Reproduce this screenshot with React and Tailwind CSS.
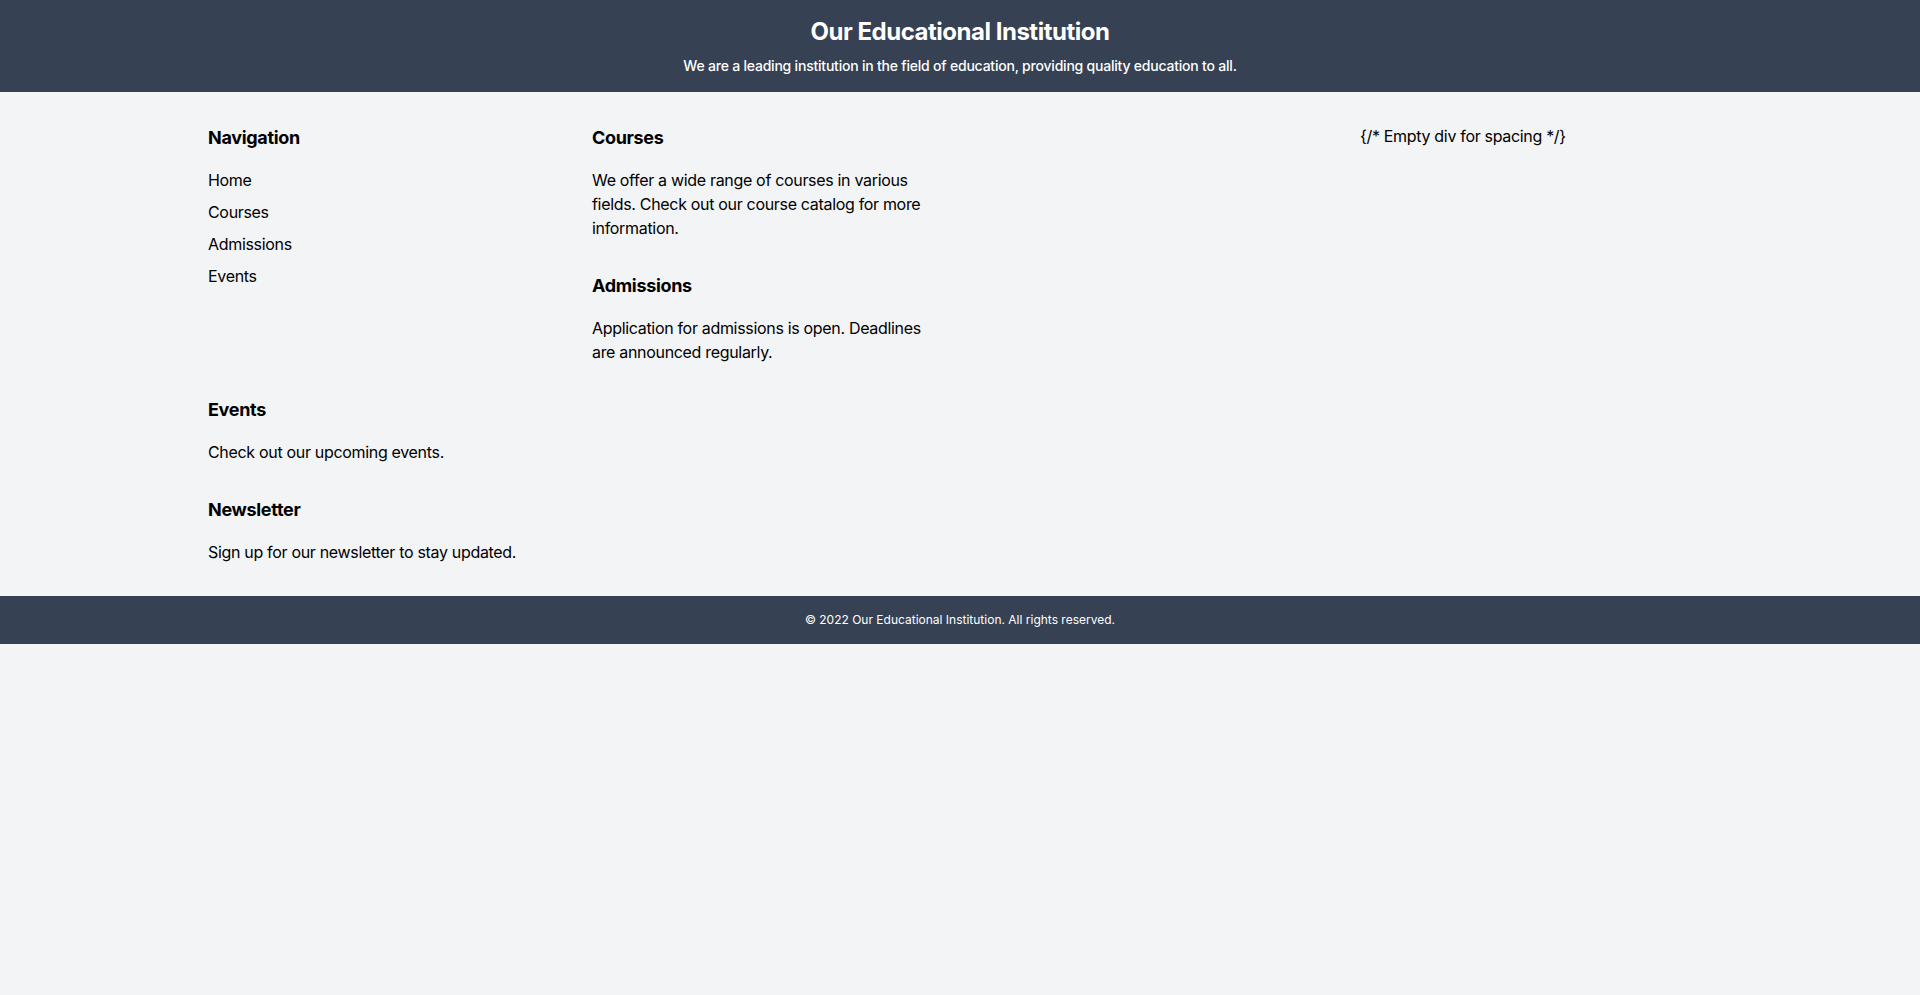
export default function App() {
  return (
    <div className="min-h-screen bg-gray-100 text-black" style={{ fontFamily: 'Inter, "Liberation Sans", sans-serif' }}>
      <header className="bg-gray-700 text-white py-4 text-center">
        <h1 className="text-2xl font-bold tracking-[-0.02em]">Our Educational Institution</h1>
        <p className="mt-2 text-sm font-medium tracking-[-0.015em]">We are a leading institution in the field of education, providing quality education to all.</p>
      </header>
      <main className="container mx-auto px-4 py-8 tracking-[-0.02em]">
        <div className="grid grid-cols-4 gap-8">
          <div>
            <h2 className="text-lg font-bold mb-4">Navigation</h2>
            <ul className="space-y-2">
              <li>Home</li>
              <li>Courses</li>
              <li>Admissions</li>
              <li>Events</li>
            </ul>
          </div>
          <div className="space-y-8">
            <section>
              <h2 className="text-lg font-bold mb-4">Courses</h2>
              <p>We offer a wide range of courses in various fields. Check out our course catalog for more information.</p>
            </section>
            <section>
              <h2 className="text-lg font-bold mb-4">Admissions</h2>
              <p>Application for admissions is open. Deadlines are announced regularly.</p>
            </section>
          </div>
          <div></div>
          <div>{'{/* Empty div for spacing */}'}</div>
          <div className="space-y-8">
            <section>
              <h2 className="text-lg font-bold mb-4">Events</h2>
              <p>Check out our upcoming events.</p>
            </section>
            <section>
              <h2 className="text-lg font-bold mb-4">Newsletter</h2>
              <p>Sign up for our newsletter to stay updated.</p>
            </section>
          </div>
        </div>
      </main>
      <footer className="bg-gray-700 text-white py-4 text-center text-xs">
        © 2022 Our Educational Institution. All rights reserved.
      </footer>
    </div>
  );
}
